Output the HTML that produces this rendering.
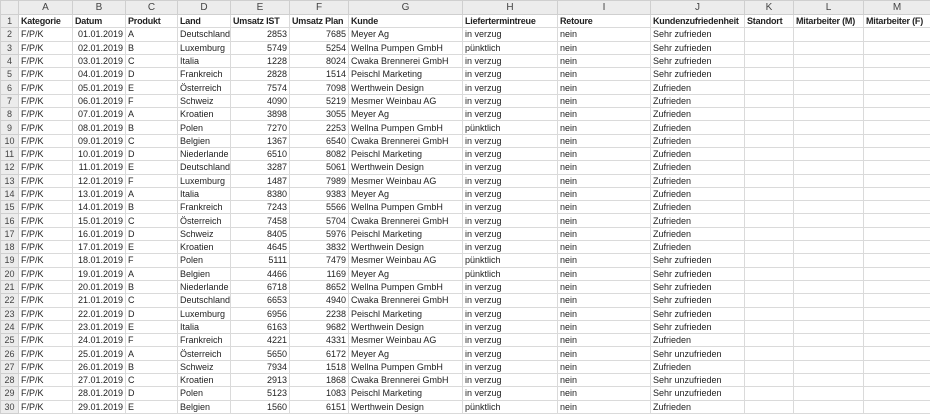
<!DOCTYPE html>
<html><head><meta charset="utf-8"><style>
html,body{margin:0;padding:0;background:#fff;width:930px;height:414px;overflow:hidden}
table{border-collapse:collapse;table-layout:fixed;width:930px;font-family:"Liberation Sans",sans-serif;font-size:9px;color:#222}
td{border:1px solid #dadada;padding:0 2px;height:12.3px;line-height:12px;white-space:nowrap;overflow:hidden}
tr.h td{background:#ececec;color:#444;text-align:center;height:13px;border-color:#cfcfcf;font-size:10px}
td.n{background:#ececec;color:#444;text-align:center;border-color:#cfcfcf;padding:0}
td.r{text-align:right}
tr.b td{font-weight:bold;letter-spacing:-0.2px}
</style></head><body>
<table>
<colgroup><col style="width:18px"><col style="width:54px"><col style="width:53px"><col style="width:52px"><col style="width:53px"><col style="width:59px"><col style="width:59px"><col style="width:114px"><col style="width:95px"><col style="width:93px"><col style="width:94px"><col style="width:49px"><col style="width:70px"><col style="width:67px"></colgroup>
<tr class="h"><td></td><td>A</td><td>B</td><td>C</td><td>D</td><td>E</td><td>F</td><td>G</td><td>H</td><td>I</td><td>J</td><td>K</td><td>L</td><td>M</td></tr>
<tr class="b"><td class="n" style="font-weight:normal">1</td><td>Kategorie</td><td>Datum</td><td>Produkt</td><td>Land</td><td>Umsatz IST</td><td>Umsatz Plan</td><td>Kunde</td><td>Liefertermintreue</td><td>Retoure</td><td>Kundenzufriedenheit</td><td>Standort</td><td>Mitarbeiter (M)</td><td>Mitarbeiter (F)</td></tr>
<tr><td class="n">2</td><td>F/P/K</td><td class="r">01.01.2019</td><td>A</td><td>Deutschland</td><td class="r">2853</td><td class="r">7685</td><td>Meyer Ag</td><td>in verzug</td><td>nein</td><td>Sehr zufrieden</td><td></td><td></td><td></td></tr>
<tr><td class="n">3</td><td>F/P/K</td><td class="r">02.01.2019</td><td>B</td><td>Luxemburg</td><td class="r">5749</td><td class="r">5254</td><td>Wellna Pumpen GmbH</td><td>pünktlich</td><td>nein</td><td>Sehr zufrieden</td><td></td><td></td><td></td></tr>
<tr><td class="n">4</td><td>F/P/K</td><td class="r">03.01.2019</td><td>C</td><td>Italia</td><td class="r">1228</td><td class="r">8024</td><td>Cwaka Brennerei GmbH</td><td>in verzug</td><td>nein</td><td>Sehr zufrieden</td><td></td><td></td><td></td></tr>
<tr><td class="n">5</td><td>F/P/K</td><td class="r">04.01.2019</td><td>D</td><td>Frankreich</td><td class="r">2828</td><td class="r">1514</td><td>Peischl Marketing</td><td>in verzug</td><td>nein</td><td>Sehr zufrieden</td><td></td><td></td><td></td></tr>
<tr><td class="n">6</td><td>F/P/K</td><td class="r">05.01.2019</td><td>E</td><td>Österreich</td><td class="r">7574</td><td class="r">7098</td><td>Werthwein Design</td><td>in verzug</td><td>nein</td><td>Zufrieden</td><td></td><td></td><td></td></tr>
<tr><td class="n">7</td><td>F/P/K</td><td class="r">06.01.2019</td><td>F</td><td>Schweiz</td><td class="r">4090</td><td class="r">5219</td><td>Mesmer Weinbau AG</td><td>in verzug</td><td>nein</td><td>Zufrieden</td><td></td><td></td><td></td></tr>
<tr><td class="n">8</td><td>F/P/K</td><td class="r">07.01.2019</td><td>A</td><td>Kroatien</td><td class="r">3898</td><td class="r">3055</td><td>Meyer Ag</td><td>in verzug</td><td>nein</td><td>Zufrieden</td><td></td><td></td><td></td></tr>
<tr><td class="n">9</td><td>F/P/K</td><td class="r">08.01.2019</td><td>B</td><td>Polen</td><td class="r">7270</td><td class="r">2253</td><td>Wellna Pumpen GmbH</td><td>pünktlich</td><td>nein</td><td>Zufrieden</td><td></td><td></td><td></td></tr>
<tr><td class="n">10</td><td>F/P/K</td><td class="r">09.01.2019</td><td>C</td><td>Belgien</td><td class="r">1367</td><td class="r">6540</td><td>Cwaka Brennerei GmbH</td><td>in verzug</td><td>nein</td><td>Zufrieden</td><td></td><td></td><td></td></tr>
<tr><td class="n">11</td><td>F/P/K</td><td class="r">10.01.2019</td><td>D</td><td>Niederlande</td><td class="r">6510</td><td class="r">8082</td><td>Peischl Marketing</td><td>in verzug</td><td>nein</td><td>Zufrieden</td><td></td><td></td><td></td></tr>
<tr><td class="n">12</td><td>F/P/K</td><td class="r">11.01.2019</td><td>E</td><td>Deutschland</td><td class="r">3287</td><td class="r">5061</td><td>Werthwein Design</td><td>in verzug</td><td>nein</td><td>Zufrieden</td><td></td><td></td><td></td></tr>
<tr><td class="n">13</td><td>F/P/K</td><td class="r">12.01.2019</td><td>F</td><td>Luxemburg</td><td class="r">1487</td><td class="r">7989</td><td>Mesmer Weinbau AG</td><td>in verzug</td><td>nein</td><td>Zufrieden</td><td></td><td></td><td></td></tr>
<tr><td class="n">14</td><td>F/P/K</td><td class="r">13.01.2019</td><td>A</td><td>Italia</td><td class="r">8380</td><td class="r">9383</td><td>Meyer Ag</td><td>in verzug</td><td>nein</td><td>Zufrieden</td><td></td><td></td><td></td></tr>
<tr><td class="n">15</td><td>F/P/K</td><td class="r">14.01.2019</td><td>B</td><td>Frankreich</td><td class="r">7243</td><td class="r">5566</td><td>Wellna Pumpen GmbH</td><td>in verzug</td><td>nein</td><td>Zufrieden</td><td></td><td></td><td></td></tr>
<tr><td class="n">16</td><td>F/P/K</td><td class="r">15.01.2019</td><td>C</td><td>Österreich</td><td class="r">7458</td><td class="r">5704</td><td>Cwaka Brennerei GmbH</td><td>in verzug</td><td>nein</td><td>Zufrieden</td><td></td><td></td><td></td></tr>
<tr><td class="n">17</td><td>F/P/K</td><td class="r">16.01.2019</td><td>D</td><td>Schweiz</td><td class="r">8405</td><td class="r">5976</td><td>Peischl Marketing</td><td>in verzug</td><td>nein</td><td>Zufrieden</td><td></td><td></td><td></td></tr>
<tr><td class="n">18</td><td>F/P/K</td><td class="r">17.01.2019</td><td>E</td><td>Kroatien</td><td class="r">4645</td><td class="r">3832</td><td>Werthwein Design</td><td>in verzug</td><td>nein</td><td>Zufrieden</td><td></td><td></td><td></td></tr>
<tr><td class="n">19</td><td>F/P/K</td><td class="r">18.01.2019</td><td>F</td><td>Polen</td><td class="r">5111</td><td class="r">7479</td><td>Mesmer Weinbau AG</td><td>pünktlich</td><td>nein</td><td>Sehr zufrieden</td><td></td><td></td><td></td></tr>
<tr><td class="n">20</td><td>F/P/K</td><td class="r">19.01.2019</td><td>A</td><td>Belgien</td><td class="r">4466</td><td class="r">1169</td><td>Meyer Ag</td><td>pünktlich</td><td>nein</td><td>Sehr zufrieden</td><td></td><td></td><td></td></tr>
<tr><td class="n">21</td><td>F/P/K</td><td class="r">20.01.2019</td><td>B</td><td>Niederlande</td><td class="r">6718</td><td class="r">8652</td><td>Wellna Pumpen GmbH</td><td>in verzug</td><td>nein</td><td>Sehr zufrieden</td><td></td><td></td><td></td></tr>
<tr><td class="n">22</td><td>F/P/K</td><td class="r">21.01.2019</td><td>C</td><td>Deutschland</td><td class="r">6653</td><td class="r">4940</td><td>Cwaka Brennerei GmbH</td><td>in verzug</td><td>nein</td><td>Sehr zufrieden</td><td></td><td></td><td></td></tr>
<tr><td class="n">23</td><td>F/P/K</td><td class="r">22.01.2019</td><td>D</td><td>Luxemburg</td><td class="r">6956</td><td class="r">2238</td><td>Peischl Marketing</td><td>in verzug</td><td>nein</td><td>Sehr zufrieden</td><td></td><td></td><td></td></tr>
<tr><td class="n">24</td><td>F/P/K</td><td class="r">23.01.2019</td><td>E</td><td>Italia</td><td class="r">6163</td><td class="r">9682</td><td>Werthwein Design</td><td>in verzug</td><td>nein</td><td>Sehr zufrieden</td><td></td><td></td><td></td></tr>
<tr><td class="n">25</td><td>F/P/K</td><td class="r">24.01.2019</td><td>F</td><td>Frankreich</td><td class="r">4221</td><td class="r">4331</td><td>Mesmer Weinbau AG</td><td>in verzug</td><td>nein</td><td>Zufrieden</td><td></td><td></td><td></td></tr>
<tr><td class="n">26</td><td>F/P/K</td><td class="r">25.01.2019</td><td>A</td><td>Österreich</td><td class="r">5650</td><td class="r">6172</td><td>Meyer Ag</td><td>in verzug</td><td>nein</td><td>Sehr unzufrieden</td><td></td><td></td><td></td></tr>
<tr><td class="n">27</td><td>F/P/K</td><td class="r">26.01.2019</td><td>B</td><td>Schweiz</td><td class="r">7934</td><td class="r">1518</td><td>Wellna Pumpen GmbH</td><td>in verzug</td><td>nein</td><td>Zufrieden</td><td></td><td></td><td></td></tr>
<tr><td class="n">28</td><td>F/P/K</td><td class="r">27.01.2019</td><td>C</td><td>Kroatien</td><td class="r">2913</td><td class="r">1868</td><td>Cwaka Brennerei GmbH</td><td>in verzug</td><td>nein</td><td>Sehr unzufrieden</td><td></td><td></td><td></td></tr>
<tr><td class="n">29</td><td>F/P/K</td><td class="r">28.01.2019</td><td>D</td><td>Polen</td><td class="r">5123</td><td class="r">1083</td><td>Peischl Marketing</td><td>in verzug</td><td>nein</td><td>Sehr unzufrieden</td><td></td><td></td><td></td></tr>
<tr><td class="n">30</td><td>F/P/K</td><td class="r">29.01.2019</td><td>E</td><td>Belgien</td><td class="r">1560</td><td class="r">6151</td><td>Werthwein Design</td><td>pünktlich</td><td>nein</td><td>Zufrieden</td><td></td><td></td><td></td></tr>
<tr><td class="n">31</td><td></td><td></td><td></td><td></td><td></td><td></td><td></td><td></td><td></td><td></td><td></td><td></td><td></td></tr>
</table>
</body></html>
